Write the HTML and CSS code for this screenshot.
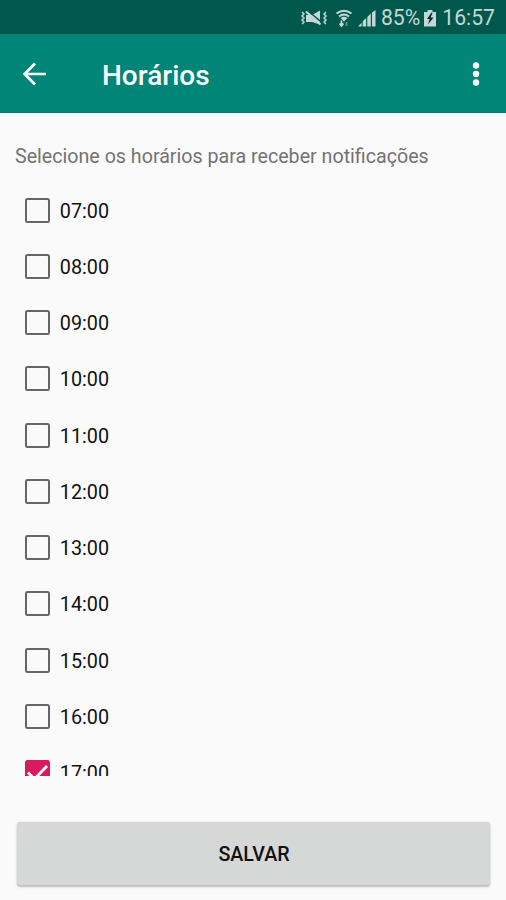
FILE: index.html
```html
<!DOCTYPE html>
<html lang="pt-BR">
<head>
<meta charset="utf-8">
<title>Horários</title>
<link rel="stylesheet" href="styles.css">
</head>
<body>
<div class="status">
  <svg class="vibrate" viewBox="0 0 28 18" width="28" height="18">
    <path d="M2 3l2 2-2 2 2 2-2 2 2 2-2 2M26 3l-2 2 2 2-2 2 2 2-2 2 2 2" fill="none" stroke="currentColor" stroke-width="1.5"/>
    <path d="M6 6h6l8-4.500v14L12 13H6z" fill="currentColor"/>
    <path d="M8 2l14 11.500" stroke="#00574b" stroke-width="1.600"/>
    <path d="M6 2.500l14.500 13" stroke="currentColor" stroke-width="2.200"/>
  </svg>
  <svg class="wifi" viewBox="0 0 18 18" width="18" height="18">
    <path d="M1.500 4.500Q9-1 16.500 4.500M4 7.500Q9 3.500 14 7.500" fill="none" stroke="currentColor" stroke-width="2"/>
    <path d="M5.500 9Q9 6.500 12.500 9L9 12.500z" fill="currentColor"/>
    <path d="M6.500 11.500v5.500M4.600 14.500l1.900 2.500 1.900-2.500" fill="none" stroke="currentColor" stroke-width="1.800"/>
    <path d="M11.500 17v-4" stroke="#5f958c" stroke-width="1.800"/>
  </svg>
  <svg class="signal" viewBox="0 0 18 18" width="18" height="18">
    <path d="M0 17.500l3.600-3.800v3.800zM4.700 12.200L8.200 9v8.500H4.700zM9.300 8l3.500-3.500v13H9.300zM14 3.500L17.500 1v16.500H14z" fill="currentColor"/>
  </svg>
  <span class="percent">85%</span>
  <svg class="battery" viewBox="0 0 12 18" width="12" height="18">
    <path d="M3.500 1h5v2H12v14.500H0V3h3.500z" fill="currentColor"/>
    <path d="M7.500 3.500L3 10h2.600L4 15.500 9.500 8.500H6.600L8.500 4z" fill="#062b26"/>
  </svg>
  <span class="clock">16:57</span>
</div>
<header class="appbar">
  <svg class="back" viewBox="0 0 24 24" width="24" height="24">
    <path d="M23 12H2M12 1.500L1.700 12 12 22.500" fill="none" stroke="#fff" stroke-width="2.700"/>
  </svg>
  <h1>Horários</h1>
  <svg class="more" viewBox="0 0 8 24" width="8" height="24">
    <g fill="#fff"><circle cx="4" cy="3.500" r="3.200"/><circle cx="4" cy="12" r="3.200"/><circle cx="4" cy="20.500" r="3.200"/></g>
  </svg>
</header>
<main>
  <p class="hint">Selecione os horários para receber notificações</p>
  <div class="list">
    <label class="row"><span class="box"></span><span class="time">07:00</span></label>
    <label class="row"><span class="box"></span><span class="time">08:00</span></label>
    <label class="row"><span class="box"></span><span class="time">09:00</span></label>
    <label class="row"><span class="box"></span><span class="time">10:00</span></label>
    <label class="row"><span class="box"></span><span class="time">11:00</span></label>
    <label class="row"><span class="box"></span><span class="time">12:00</span></label>
    <label class="row"><span class="box"></span><span class="time">13:00</span></label>
    <label class="row"><span class="box"></span><span class="time">14:00</span></label>
    <label class="row"><span class="box"></span><span class="time">15:00</span></label>
    <label class="row"><span class="box"></span><span class="time">16:00</span></label>
    <label class="row"><span class="box checked"><svg viewBox="0 0 25 25" width="25" height="25"><path d="M3 12.500l6.500 6.500L22 6" fill="none" stroke="#fff" stroke-width="2.800"/></svg></span><span class="time">17:00</span></label>
  </div>
  <button class="save" type="button">SALVAR</button>
</main>
</body>
</html>
```
FILE: styles.css
```css
* { box-sizing: border-box; }
body {
  margin: 0;
  height: 900px;
  display: flex;
  flex-direction: column;
  overflow: hidden;
  background: #fafafa;
  color: #111;
  font-family: Roboto, "Liberation Sans", sans-serif;
}
svg { display: block; flex: none; }
.status {
  height: 34px;
  flex: none;
  display: flex;
  align-items: center;
  justify-content: flex-end;
  padding: 2px 11px 0 0;
  background: #00574b;
  color: #c3d8d4;
  font-size: 21.2px;
  line-height: 32px;
}
.wifi { margin-left: 7px; }
.signal { margin-left: 5px; }
.percent { margin-left: 5px; }
.battery { margin-left: 4px; }
.clock { margin-left: 6px; }
.appbar {
  height: 79px;
  flex: none;
  display: flex;
  align-items: center;
  padding: 1px 26px 0 23px;
  background: #008577;
  border-bottom: 1px solid #007d70;
}
h1 {
  flex: 1;
  margin: 4px 0 0 55px;
  color: #fff;
  font-size: 28px;
  font-weight: 500;
  line-height: 36px;
}
main {
  flex: 1;
  display: flex;
  flex-direction: column;
  padding: 28px 15px 0;
}
.hint {
  margin: 0;
  height: 41px;
  padding-top: 1px;
  color: #737373;
  font-size: 19.65px;
  line-height: 30px;
  white-space: nowrap;
}
.list { height: 594px; overflow: hidden; }
.row {
  height: 56.25px;
  display: flex;
  align-items: center;
  padding-left: 9.5px;
}
.box {
  width: 25px;
  height: 25px;
  flex: none;
  border: 2px solid #666;
  border-radius: 2.5px;
}
.box.checked { border: 0; background: #d81b60; }
.time {
  margin: 3px 0 0 10.3px;
  font-size: 19.8px;
  line-height: 26px;
}
.save {
  height: 63px;
  flex: none;
  margin: 46px 1px 0 2px;
  padding: 2px 0 0 1px;
  border: 0;
  border-radius: 3px;
  background: #d6d7d7;
  box-shadow: 0 2px 2px #bdbdbd, 0 0 2px #ddd;
  color: #111;
  font: 500 19.7px/61px Roboto, "Liberation Sans", sans-serif;
}
```
